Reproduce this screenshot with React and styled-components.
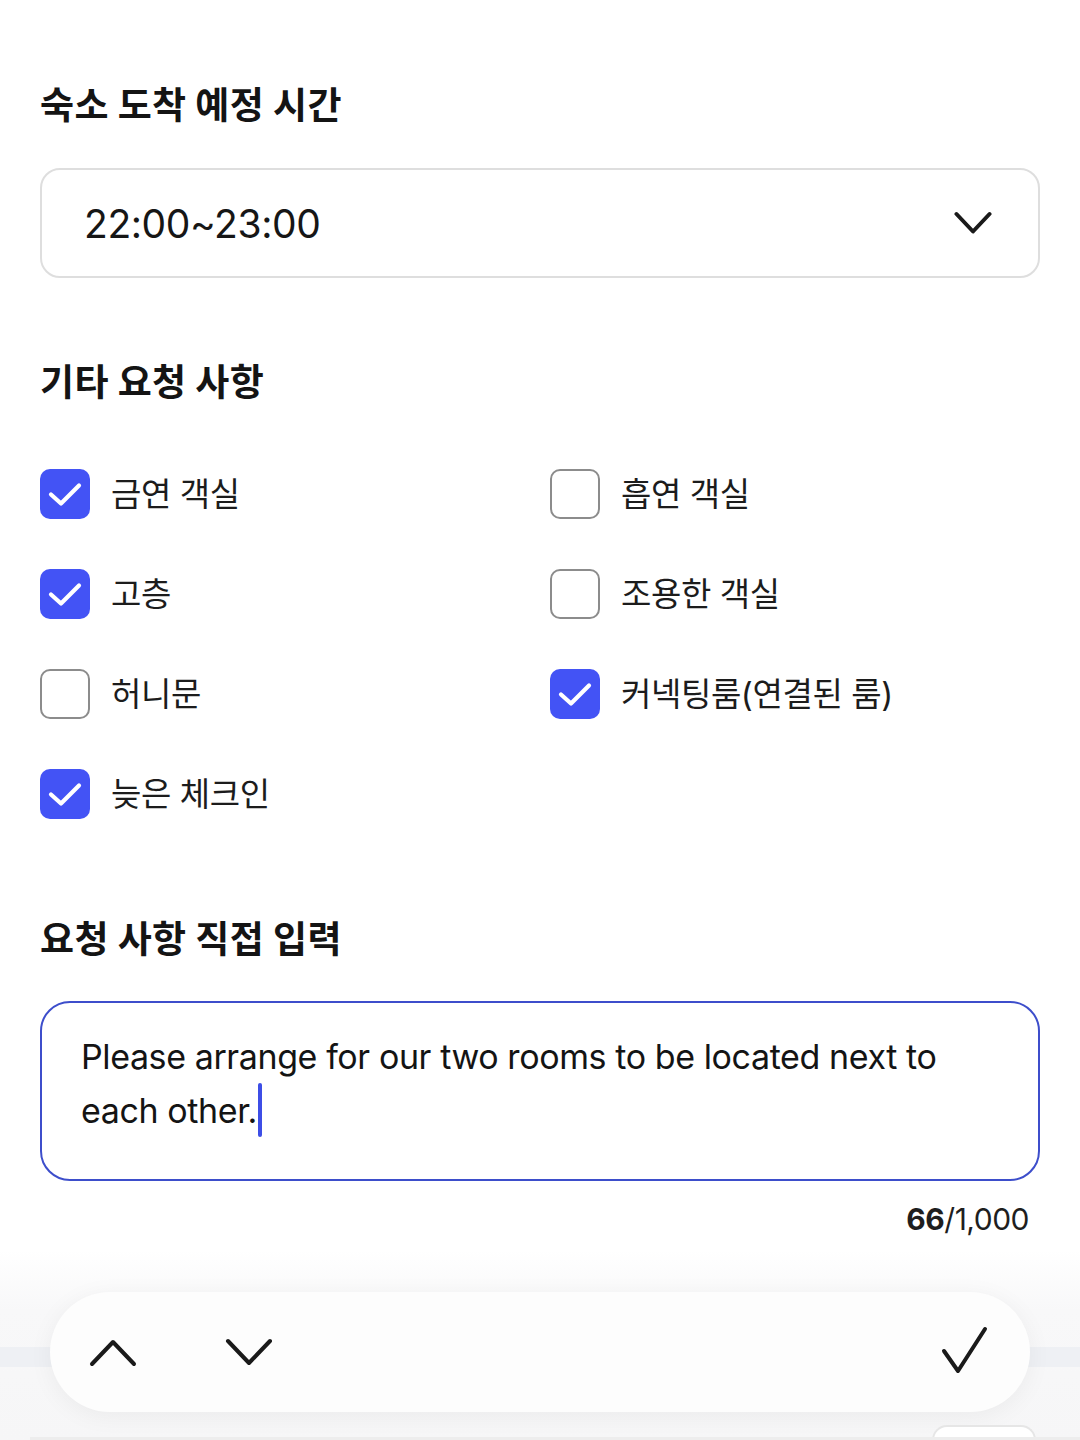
import React from "react";
import styled, { createGlobalStyle } from "styled-components";

const Global = createGlobalStyle`
  html, body { margin: 0; padding: 0; background: #ffffff; }
  body { font-family: Inter, "Noto Sans CJK KR", sans-serif; color: #1a1a1a; }
  * { box-sizing: border-box; }
`;

const Page = styled.div`
  width: 1080px;
  height: 1440px;
  overflow: hidden;
  display: flex;
  flex-direction: column;
  background: #fff;
`;

const Content = styled.main`
  padding: 78px 40px 0 40px;
  display: flex;
  flex-direction: column;
`;

const Heading = styled.h2`
  margin: ${(p) => p.$mt || 0}px 0 0 0;
  font-family: "Noto Sans CJK KR", sans-serif;
  font-size: 37px;
  line-height: 50px;
  font-weight: 700;
  letter-spacing: 0.4px;
  color: #141414;
`;

const Select = styled.div`
  margin-top: 40px;
  height: 110px;
  border: 2px solid #dedede;
  border-radius: 20px;
  display: flex;
  align-items: center;
  justify-content: space-between;
  padding: 0 46px 0 42px;
`;

const SelectValue = styled.span`
  font-family: Inter, sans-serif;
  font-size: 39px;
  letter-spacing: -0.4px;
  color: #161616;
`;

const Grid = styled.div`
  margin-top: 64px;
  display: grid;
  grid-template-columns: 510px 1fr;
  row-gap: 50px;
`;

const Option = styled.label`
  display: flex;
  align-items: center;
  gap: 21px;
  height: 50px;
`;

const Box = styled.span`
  width: 50px;
  height: 50px;
  border-radius: 10px;
  flex: none;
  display: flex;
  align-items: center;
  justify-content: center;
  background: ${(p) => (p.$checked ? "#4353F5" : "#ffffff")};
  border: ${(p) => (p.$checked ? "none" : "2px solid #8c8c8c")};
`;

const OptionText = styled.span`
  font-family: Inter, "Noto Sans CJK KR", sans-serif;
  font-size: 33px;
  letter-spacing: -0.4px;
  color: #1c1c1c;
  margin-top: -4px;
`;

const TextArea = styled.div`
  margin-top: 39px;
  height: 180px;
  border: 2px solid #3d4ecb;
  border-radius: 30px;
  padding: 27px 90px 0 39px;
  font-family: Inter, sans-serif;
  font-size: 34px;
  line-height: 53px;
  letter-spacing: -0.4px;
  color: #141414;
`;

const Caret = styled.span`
  display: inline-block;
  width: 4px;
  height: 54px;
  margin-left: 1px;
  vertical-align: -14px;
  border-radius: 2px;
  background: #3d4ee6;
`;

const Counter = styled.div`
  margin-top: 20px;
  padding-right: 11px;
  text-align: right;
  font-family: Inter, sans-serif;
  font-size: 30px;
  line-height: 36px;
  letter-spacing: -0.5px;
  color: #1e1e1e;
  b { font-weight: 700; }
`;

const Bottom = styled.div`
  margin-top: 13px;
  flex: 1;
  display: flex;
  flex-direction: column;
  background: linear-gradient(#ffffff 0px, #f8f8f9 60px, #f6f6f7 100%);
`;

const ToolbarWrap = styled.div`
  position: relative;
  padding: 42px 50px 0 50px;
  &::before {
    content: "";
    position: absolute;
    left: 0;
    right: 0;
    top: 97px;
    height: 20px;
    background: #eef0f4;
  }
`;

const Toolbar = styled.div`
  position: relative;
  height: 120px;
  border-radius: 60px;
  background: #fdfdfd;
  box-shadow: 0 4px 24px rgba(0, 0, 0, 0.05);
  display: flex;
  align-items: center;
  padding: 0 40px 0 38px;
`;

const ToolButton = styled.button`
  border: none;
  background: transparent;
  padding: 0;
  margin: 0 ${(p) => p.$mr || 0}px 0 0;
  display: flex;
  align-items: center;
  justify-content: center;
  width: ${(p) => p.$w || 50}px;
  height: 50px;
  margin-left: ${(p) => (p.$push ? "auto" : "0")};
`;

const SheetEdge = styled.div`
  flex: 1;
  display: flex;
  justify-content: flex-end;
  align-items: flex-end;
  padding: 0 44px 0 0;
  position: relative;
  &::after {
    content: "";
    position: absolute;
    left: 30px;
    right: 0;
    bottom: 0;
    height: 3px;
    background: #ededed;
  }
`;

const Tab = styled.div`
  width: 104px;
  height: 15px;
  border: 2px solid #e6e6e6;
  border-bottom: none;
  border-radius: 30px 30px 0 0;
  background: #ffffff;
`;

const Check = () => (
  <svg width="50" height="50" viewBox="0 0 50 50" fill="none">
    <path d="M11 25.5 L21 34.5 L39 16.5" stroke="#fff" strokeWidth="4.2" strokeLinecap="round" strokeLinejoin="round" />
  </svg>
);

const ChevronDown = ({ w = 38, h = 24 }) => (
  <svg width={w} height={h} viewBox="0 0 38 24" fill="none">
    <path d="M2.5 3 L19 20.5 L35.5 3" stroke="#1a1a1a" strokeWidth="4" strokeLinecap="round" strokeLinejoin="round" />
  </svg>
);

const ToolUp = () => (
  <svg width="50" height="30" viewBox="0 0 50 30" fill="none">
    <path d="M4 27 L25 5 L46 27" stroke="#1a1a1a" strokeWidth="4" strokeLinecap="round" strokeLinejoin="round" />
  </svg>
);

const ToolDown = () => (
  <svg width="50" height="30" viewBox="0 0 50 30" fill="none">
    <path d="M4 4 L25 26 L46 4" stroke="#1a1a1a" strokeWidth="4" strokeLinecap="round" strokeLinejoin="round" />
  </svg>
);

const ToolCheck = () => (
  <svg width="52" height="52" viewBox="0 0 50 50" fill="none">
    <path d="M4 24 L18 44 L45 2" stroke="#1a1a1a" strokeWidth="4" strokeLinecap="round" strokeLinejoin="round" />
  </svg>
);

const options = [
  { label: "금연 객실", checked: true },
  { label: "흡연 객실", checked: false },
  { label: "고층", checked: true },
  { label: "조용한 객실", checked: false },
  { label: "허니문", checked: false },
  { label: "커넥팅룸(연결된 룸)", checked: true },
  { label: "늦은 체크인", checked: true },
];

export default function App() {
  return (
    <>
      <Global />
      <Page>
        <Content>
          <Heading>숙소 도착 예정 시간</Heading>
          <Select>
            <SelectValue>22:00~23:00</SelectValue>
            <ChevronDown />
          </Select>

          <Heading $mt={77}>기타 요청 사항</Heading>
          <Grid>
            {options.map((o) => (
              <Option key={o.label}>
                <Box $checked={o.checked}>{o.checked && <Check />}</Box>
                <OptionText>{o.label}</OptionText>
              </Option>
            ))}
          </Grid>

          <Heading $mt={93}>요청 사항 직접 입력</Heading>
          <TextArea>
            Please arrange for our two rooms to be located next to each other.
            <Caret />
          </TextArea>
          <Counter>
            <b>66</b>/1,000
          </Counter>
        </Content>

        <Bottom>
          <ToolbarWrap>
            <Toolbar>
              <ToolButton $mr={86} aria-label="이전">
                <ToolUp />
              </ToolButton>
              <ToolButton aria-label="다음">
                <ToolDown />
              </ToolButton>
              <ToolButton $push aria-label="완료">
                <ToolCheck />
              </ToolButton>
            </Toolbar>
          </ToolbarWrap>
          <SheetEdge>
            <Tab />
          </SheetEdge>
        </Bottom>
      </Page>
    </>
  );
}
